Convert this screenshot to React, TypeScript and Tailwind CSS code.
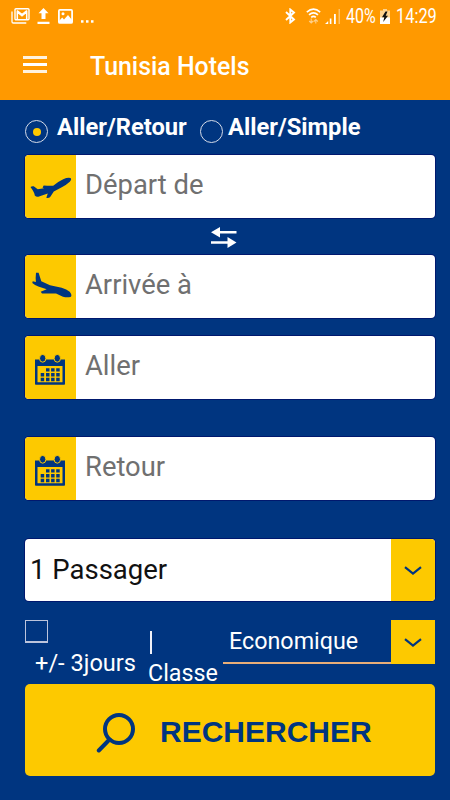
import React from "react";

type FieldIcon = "takeoff" | "landing" | "calendar";

// Status bar: notifications on the left, system icons on the right
function StatusBar() {
  return (
    <div className="flex h-8 items-center justify-between pl-[11px] pr-[14px]">
      <div className="flex items-center text-white">
        <svg width="19" height="16" viewBox="0 0 19 16" fill="none">
          <path d="M1 3.5v10.2q0 1.3 1.3 1.3h13" stroke="#fff" strokeWidth="1.3" />
          <rect x="4" y=".8" width="14" height="11" rx="1" stroke="#fff" strokeWidth="1.4" />
          <path d="M6.3 11V4l4.7 3.8L15.7 4v7M6 2.5l5 4 5-4" stroke="#fff" strokeWidth="1.5" />
        </svg>
        <svg className="ml-[7px]" width="13" height="16" viewBox="0 0 13 16" fill="#fff">
          <path d="M6.5 0l5 5.2h-3V11h-4V5.2h-3zM.5 13.8h12V16H.5z" />
        </svg>
        <svg className="ml-2" width="15" height="15" viewBox="0 0 15 15" fill="none">
          <rect x=".9" y=".9" width="13.2" height="13" rx="1" stroke="#fff" strokeWidth="1.8" />
          <circle cx="5" cy="4.8" r="1.5" fill="#fff" />
          <path d="M1 12l3.2-3.5L6 10.4l4-4.3 4 5V14H1z" fill="#fff" />
        </svg>
        <svg className="ml-2 mt-[11px]" width="14" height="3" viewBox="0 0 14 3" fill="#fff">
          <rect width="2.5" height="2.5" y=".2" />
          <rect width="2.5" height="2.5" x="5" y=".2" />
          <rect width="2.5" height="2.5" x="10" y=".2" />
        </svg>
      </div>

      <div className="flex items-center">
        <svg width="11" height="16" viewBox="0 0 11 16" fill="none" stroke="#fff" strokeWidth="1.9">
          <path d="M1 4l8 7.500-3.700 3V1.500l3.700 3L1 12" />
        </svg>
        <svg className="ml-[10px]" width="15" height="16" viewBox="0 0 15 16" fill="none" stroke="#fff">
          <path d="M.8 4.200q6.700-6 13.400 0M3 6.800q4.500-4 9 0M5.200 9.300q2.300-2 4.600 0" strokeWidth="1.600" />
          <path d="M5.200 10.500V15m-2-2l2 2 2-2M9.800 15.500v-4m-2 2l2-2 2 2" stroke="#ffd08a" strokeWidth="1.100" />
        </svg>
        <svg className="ml-[4px]" width="15" height="15" viewBox="0 0 15 15" fill="#fff">
          <path d="M0 15l3.200-3v3zM4.800 9.500h1.600V15H4.800zM9 5h1.800v10H9z" />
          <path d="M13.500 0H15v15h-1.500z" fill="#ffc266" />
        </svg>
        <span className="ml-[6px] w-[31px] origin-left scale-x-[0.82] pt-[2px] text-[19.5px] leading-8 whitespace-nowrap text-white">
          40%
        </span>
        <svg className="ml-[3px]" width="10" height="15" viewBox="0 0 10 15">
          <path d="M3 0h4v1.500h3V15H0V1.500h3z" fill="#ffd38f" />
          <path d="M0 8.500h10V15H0z" fill="#fff" />
          <path d="M5.500 2.500L2 8.300h2.300L3.200 13 8 6.800H5.700L7.500 2.500z" fill="#111" />
        </svg>
        <span className="ml-[6px] w-[40px] origin-left scale-x-[0.84] pt-[2px] text-[19.5px] leading-8 whitespace-nowrap text-white">
          14:29
        </span>
      </div>
    </div>
  );
}

function Icon({ name }: { name: FieldIcon }) {
  if (name === "takeoff") {
    return (
      <svg width="51" height="63" viewBox="0 0 51 63" fill="#003580">
        <path d="M5.500 32q1.500-1.200 3.200-.7l4 3 6.300-1-1.500-.8 1.200-2q5 .5 9.500.3 5.500-4.500 10-6.500 4.500-2 7.300-1.200 1.500 1.400-.7 3.700-3.500 3.200-8 5.500l-8 4.200-3.800 5.800q-1.700 1-3.700.4l1.500-4.200-9.500 3.200q-2 .5-3.500-1.200-.3-3-4.300-8.500z" />
      </svg>
    );
  }
  if (name === "landing") {
    return (
      <svg width="51" height="63" viewBox="0 0 51 63" fill="#003580">
        <path d="M11 17.700h2.600q1.300 4 2.700 8.500l8.700 4.100 11.700 2.400q5 1.500 8 4 2.500 3 1.300 5-3.500 1-8 0L31 38.600H17l-1.300-1.800 6-2.500-8.400-2.800q-3.500-1.300-6-3.500l.4-1.700 3.200.8q-.5-4.500.1-9.400z" />
      </svg>
    );
  }
  return (
    <svg width="51" height="63" viewBox="0 0 51 63" fill="#003580">
      <path fillRule="evenodd" d="M10 23.500h30V48q0 .8-.8.800H10.800q-.8 0-.8-.8zm2.500 6.500v16.300h25V30z" />
      <g stroke="#fdc900" strokeWidth="1">
        <ellipse cx="17.700" cy="22.300" rx="3.200" ry="3.900" />
        <ellipse cx="32.300" cy="22.300" rx="3.200" ry="3.900" />
      </g>
      <path d="M21 32.200h3.500v3.400H21zM26.100 32.200h3.500v3.400h-3.500zM31.200 32.200h3.500v3.400h-3.500zM15.700 37h3.500v3.400h-3.500zM21 37h3.500v3.400H21zM26.100 37h3.500v3.400h-3.500zM31.200 37h3.500v3.400h-3.500zM15.700 41.800h3.500v3.400h-3.500zM21 41.800h3.500v3.400H21zM26.100 41.800h3.500v3.400h-3.500zM31.200 41.800h3.500v3.400h-3.500z" />
    </svg>
  );
}

function Field({ icon, label }: { icon: FieldIcon; label: string }) {
  return (
    <div className="flex h-[63px] shrink-0 overflow-hidden rounded-[4px] bg-white shadow-[0_0_0_1px_#00186e]">
      <div className="w-[51px] bg-[#fdc900]">
        <Icon name={icon} />
      </div>
      <span className="pl-[9px] text-[27.4px] leading-[60px] text-[#707070]">{label}</span>
    </div>
  );
}

function Chevron() {
  return (
    <svg className="mt-[2px]" width="18" height="10" viewBox="0 0 18 10" fill="none">
      <path d="M1 1.200l8 6.300 8-6.300" stroke="#003580" strokeWidth="2.200" />
    </svg>
  );
}

function Radio({ checked }: { checked?: boolean }) {
  return (
    <div className="mt-[20px] flex size-[23px] shrink-0 items-center justify-center rounded-full border border-[#d5dbe8]">
      {checked && <div className="size-2 rounded-full bg-[#fdc900]" />}
    </div>
  );
}

export default function App() {
  return (
    <div className="flex h-[800px] w-[450px] flex-col overflow-hidden bg-[#003580] font-['Roboto',sans-serif]">
      {/* Header */}
      <header className="h-[100px] shrink-0 bg-[#ff9900]">
        <StatusBar />
        <div className="flex h-[68px] items-center pl-[23px]">
          <div className="flex w-6 flex-col gap-[4px] pb-[3px]">
            <div className="h-[3px] bg-[#fff2df]" />
            <div className="h-[3px] bg-white" />
            <div className="h-[3px] bg-[#fff2df]" />
          </div>
          <h1 className="pt-px pl-[43px] text-[24.9px] leading-[69px] font-medium text-white">Tunisia Hotels</h1>
        </div>
      </header>

      <main className="flex flex-col pr-[15px] pl-[25px]">
        {/* Trip type */}
        <div className="flex h-[55px] text-[23.7px] leading-[55px] font-bold text-white">
          <Radio checked />
          <span className="w-[152px] pl-[9px]">Aller/Retour</span>
          <Radio />
          <span className="pl-[5px]">Aller/Simple</span>
        </div>

        <Field icon="takeoff" label="Départ de" />
        <div className="flex h-[37px] items-center justify-center pr-[12px]">
          <svg width="26" height="22" viewBox="0 0 26 22" fill="#fff">
            <path d="M0 6.200L9 1v4h16.500v2.400H9v4zM25.500 16.500L16.500 11v4.300H0v2.400h16.500V22z" />
          </svg>
        </div>
        <Field icon="landing" label="Arrivée à" />
        <div className="h-[18px]" />
        <Field icon="calendar" label="Aller" />
        <div className="h-[38px]" />
        <Field icon="calendar" label="Retour" />

        {/* Passengers */}
        <div className="mt-[39px] flex h-[62px] overflow-hidden rounded-[4px] bg-white shadow-[0_0_0_1px_#00186e]">
          <span className="flex-1 pl-[5px] text-[27.5px] leading-[62px] text-[#111]">1 Passager</span>
          <div className="flex w-[44px] items-center justify-center bg-[#fdc900]">
            <Chevron />
          </div>
        </div>

        {/* Flexible dates and cabin class */}
        <div className="flex h-[83px] pt-[19px] text-[23.3px] leading-[31px] text-white">
          <div className="w-[123px]">
            <div className="size-[23px] border border-b-2 border-[#bcc4dc]" />
            <div className="mt-[5px] pl-[10px] text-[23.6px] whitespace-nowrap">+/- 3jours</div>
          </div>
          <div className="w-[75px] pt-[11px]">
            <div className="ml-[2px] h-[23px] w-[2px] bg-[#f0f1f8]" />
            <div className="mt-[4px]">Classe</div>
          </div>
          <div className="flex h-[44px] flex-1">
            <div className="flex-1 border-b-2 border-[#e8ae78] pl-[6px] leading-[42px]">Economique</div>
            <div className="flex w-[44px] items-center justify-center bg-[#fdc900]">
              <Chevron />
            </div>
          </div>
        </div>

        <button className="flex h-[92px] items-center rounded-[5px] bg-[#fdc900] pl-[71px] text-[#003580]">
          <svg className="mt-[7px]" width="39" height="42" viewBox="0 0 39 42" fill="none" stroke="#003580" strokeLinecap="round">
            <circle cx="23" cy="16" r="14" strokeWidth="4" />
            <path d="M13.500 26.500L2.800 37.500" strokeWidth="4" />
          </svg>
          <span className="pt-[4px] pl-[25px] font-['Liberation_Sans',sans-serif] text-[30px] leading-none font-bold">
            RECHERCHER
          </span>
        </button>
      </main>
    </div>
  );
}
